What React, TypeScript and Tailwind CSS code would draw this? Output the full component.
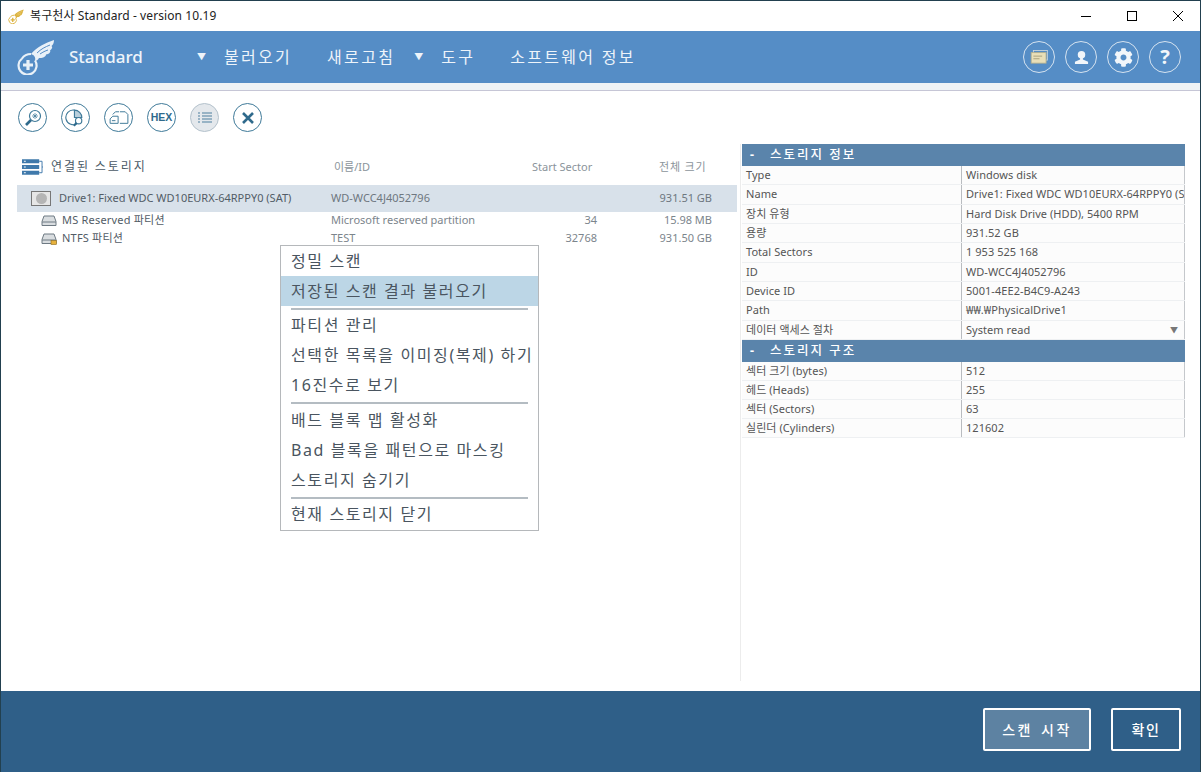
import React from "react";
import { FaCog } from "react-icons/fa";

const font = { fontFamily: '"Noto Sans","Noto Sans CJK KR",sans-serif' };

function Wing({ className = "", line = "#558dc6" }: { className?: string; line?: string }) {
  return (
    <svg viewBox="0 0 40 36" className={className} fill="none">
      <path d="M14 15C20 8 28 4 37 1C37 4 36 6 34.5 7C36 8 35 10 33 11.5C34 13 32 15 29 15.5C29 18 25 19.5 22 19C21 21 19.5 22 18 22C19 18 17 16 14 15Z" fill="currentColor" />
      <path d="M20 14C24 10 28 8 33 6M23 15C26 13 28 12 31 11" stroke={line} strokeWidth="1" />
      <path d="M18 21.5A9 9 0 1 1 5 19.5C7 16.5 10 15 14 15" stroke="currentColor" strokeWidth="2.2" />
      <path d="M11 21V31M6 26H16" stroke="currentColor" strokeWidth="3.2" />
    </svg>
  );
}

function ToolCircle({ children, active }: { children: React.ReactNode; active?: boolean }) {
  return (
    <div className={`flex h-[29px] w-[29px] items-center justify-center rounded-full border-[1.5px] ${active ? "border-[#b4c2cc] bg-[#e4e8ec]" : "border-[#3f7a99] bg-white"}`}>
      {children}
    </div>
  );
}

function HeadCircle({ children }: { children: React.ReactNode }) {
  return <div className="flex h-8 w-8 items-center justify-center rounded-full border-[1.5px] border-[#d5e3f0]">{children}</div>;
}

const infoRows = [
  ["Type", "Windows disk"],
  ["Name", "Drive1: Fixed WDC WD10EURX-64RPPY0 (S"],
  ["장치 유형", "Hard Disk Drive (HDD), 5400 RPM"],
  ["용량", "931.52 GB"],
  ["Total Sectors", "1 953 525 168"],
  ["ID", "WD-WCC4J4052796"],
  ["Device ID", "5001-4EE2-B4C9-A243"],
  ["Path", "₩₩.₩PhysicalDrive1"],
];

const structRows = [
  ["섹터 크기 (bytes)", "512"],
  ["헤드 (Heads)", "255"],
  ["섹터 (Sectors)", "63"],
  ["실린더 (Cylinders)", "121602"],
];

function Row({ a, b, arrow, tight }: { a: string; b: string; arrow?: boolean; tight?: boolean }) {
  return (
    <div className={`flex border-b border-[#eef0f2] bg-[#fcfcfc] text-[11px] leading-[17px] tracking-[0.05px] text-[#555] ${tight ? "h-[18.9px]" : "h-[19.33px]"}`}>
      <div className="w-[220px] shrink-0 truncate border-r border-[#b9bcc0] pl-1">{a}</div>
      <div className="flex min-w-0 flex-1 justify-between overflow-hidden whitespace-nowrap border-r border-[#c5c8cc] pl-1 pr-[6px]">
        <span>{b}</span>
        {arrow && <span className="text-[8px] text-[#777]">▼</span>}
      </div>
    </div>
  );
}

function Section({ title }: { title: string }) {
  return (
    <div className="flex h-[22px] items-center bg-[#5a84ab] pl-2 text-[12.5px] font-medium tracking-[2px] text-white">
      <span className="w-[20px] font-bold">-</span>
      <span>{title}</span>
    </div>
  );
}

function Menu() {
  const item = "flex h-[30px] items-center pl-[10px] text-[16px] tracking-[1.6px] text-[#4a5560] whitespace-nowrap";
  const sep = "mx-[10px] h-0 border-t-2 border-[#b4bcc2]";
  return (
    <div className="absolute left-[279px] top-[244px] h-[286px] w-[259px] border border-[#b5b8bb] bg-white">
      <div className={item}>정밀 스캔</div>
      <div className={`${item} bg-[#bcd6e6]`}>저장된 스캔 결과 불러오기</div>
      <div className="h-[2px]" />
      <div className={sep} />
      <div className={item}>파티션 관리</div>
      <div className={item}>선택한 목록을 이미징(복제) 하기</div>
      <div className={item}>16진수로 보기</div>
      <div className="h-[2px]" />
      <div className={sep} />
      <div className="h-[1px]" />
      <div className={item}>배드 블록 맵 활성화</div>
      <div className={item}>Bad 블록을 패턴으로 마스킹</div>
      <div className={item}>스토리지 숨기기</div>
      <div className="h-[2px]" />
      <div className={sep} />
      <div className={item}>현재 스토리지 닫기</div>
    </div>
  );
}

function DiskIcon({ badge }: { badge?: boolean }) {
  return (
    <svg viewBox="0 0 16 12" className="h-3 w-4" fill="none">
      <path d="M3 1H13L15 6.5V10.5H1V6.5Z" fill="#d9dde0" stroke="#6e7a83" />
      <path d="M1 7H15" stroke="#6e7a83" />
      {badge && <rect x="10" y="7.5" width="5.5" height="4" fill="#e7b13c" stroke="#8a6a1c" strokeWidth="0.6" />}
    </svg>
  );
}

export default function App() {
  return (
    <div className="relative flex h-[772px] w-[1201px] flex-col overflow-hidden border-x border-t border-x-[#22404f] border-t-[#22404f] bg-white" style={font}>
      {/* title bar */}
      <div className="flex h-[30px] shrink-0 items-center bg-white pl-[7px]">
        <Wing className="h-[15px] w-[17px] text-[#dcb23e]" line="#f6e7a8" />
        <span className="ml-[5px] text-[12px] tracking-[0.09px] text-[#222]">복구천사 Standard - version 10.19</span>
        <div className="ml-auto flex h-full items-center">
          <div className="flex w-[46px] justify-center"><div className="h-[1px] w-[10px] bg-black" /></div>
          <div className="flex w-[46px] justify-center"><div className="h-[10px] w-[10px] border border-black" /></div>
          <div className="flex w-[45px] justify-center">
            <svg viewBox="0 0 10 10" className="h-[10px] w-[10px]" stroke="#000" strokeWidth="1"><path d="M0 0L10 10M10 0L0 10" /></svg>
          </div>
        </div>
      </div>

      {/* header */}
      <div className="flex h-[52px] shrink-0 items-center bg-[#558dc6] pl-[16px] pr-[19px] text-[#eef4fa]">
        <Wing className="h-[36px] w-[40px] text-[#e9f1f8]" />
        <span className="ml-[12px] w-[128px] text-[17px] font-medium">Standard</span>
        <span className="w-[27px] text-[9px]">▼</span>
        <span className="text-[16px] tracking-[2.3px]">불러오기</span>
        <span className="ml-[35px] text-[16px] tracking-[2.3px]">새로고침</span>
        <span className="ml-[19px] w-[27px] text-[9px]">▼</span>
        <span className="text-[16px] tracking-[2.3px]">도구</span>
        <span className="ml-[35px] text-[16px] tracking-[2.3px]">소프트웨어 정보</span>
        <div className="ml-auto flex gap-[10px]">
          <HeadCircle>
            <svg viewBox="0 0 20 16" className="h-[14px] w-[19px]">
              <rect x="3" y="0.5" width="16" height="11" fill="none" stroke="#c9d6dd" />
              <rect x="0.5" y="3" width="17" height="12" fill="#e9dfb8" stroke="#b5b08e" />
              <path d="M3 7H13M3 10H10" stroke="#a09a78" />
            </svg>
          </HeadCircle>
          <HeadCircle>
            <svg viewBox="0 0 16 16" className="h-[15px] w-[15px]" fill="#f2f6fa">
              <circle cx="8" cy="5" r="4" />
              <path d="M6.5 8H9.5V10L15 12.5V15H1V12.5L6.5 10Z" />
            </svg>
          </HeadCircle>
          <HeadCircle>
            <FaCog className="h-[19px] w-[19px] text-[#f2f6fa]" />
          </HeadCircle>
          <HeadCircle>
            <span className="text-[20px] font-bold leading-none text-[#f2f6fa]">?</span>
          </HeadCircle>
        </div>
      </div>

      <div className="h-[7px] shrink-0 bg-[#eef3f6]" />
      <div className="h-[1px] shrink-0 bg-[#c6c6d6]" />

      {/* toolbar */}
      <div className="flex h-[53px] shrink-0 items-center gap-[14px] pl-[17px]">
        <ToolCircle>
          <svg viewBox="0 0 20 20" className="h-[20px] w-[20px]" fill="none" stroke="#3f7a99">
            <circle cx="12" cy="8" r="5.5" strokeWidth="1.2" />
            <path d="M12 5V11M9 8H15M10 6L14 10M14 6L10 10" strokeWidth="0.7" />
            <path d="M8 12L3 17" strokeWidth="2.6" stroke="#2f6a8c" />
          </svg>
        </ToolCircle>
        <ToolCircle>
          <svg viewBox="0 0 20 20" className="h-[21px] w-[21px]" fill="none" stroke="#3f7a99" strokeWidth="1.1">
            <path d="M9 3A7 7 0 1 0 12 15.5" />
            <path d="M9 3V10H16A7 7 0 0 0 9 3Z" fill="#b9cfdc" />
            <circle cx="13" cy="13" r="3" fill="#fff" />
            <path d="M11 15L8.5 18" strokeWidth="2" stroke="#2f6a8c" />
          </svg>
        </ToolCircle>
        <ToolCircle>
          <svg viewBox="0 0 22 18" className="h-[16px] w-[20px]" fill="none" stroke="#3f7a99" strokeWidth="1.1">
            <path d="M1 15V10L4 7H10V15Z" />
            <path d="M3 12H7" />
            <path d="M4 5L7 2H11" />
            <path d="M12 2H18L21 5V15H12" />
          </svg>
        </ToolCircle>
        <ToolCircle>
          <span className="text-[10.5px] font-bold leading-none text-[#2f6a8c]" style={{ fontFamily: '"Liberation Sans",sans-serif' }}>HEX</span>
        </ToolCircle>
        <ToolCircle active>
          <svg viewBox="0 0 14 11" className="h-[11px] w-[14px]" stroke="#7fa1b8" strokeWidth="1.4">
            <path d="M0 1H2M4 1H14M0 4H2M4 4H14M0 7H2M4 7H14M0 10H2M4 10H14" />
          </svg>
        </ToolCircle>
        <ToolCircle>
          <svg viewBox="0 0 12 12" className="h-[12px] w-[12px]" stroke="#2f6a8c" strokeWidth="2.6">
            <path d="M1 1L11 11M11 1L1 11" />
          </svg>
        </ToolCircle>
      </div>

      {/* main */}
      <div className="flex min-h-0 flex-1">
        <div className="relative w-[721px] shrink-0 pl-[16px]">
          <div className="flex h-[41px] items-start pt-[14px] text-[11px] text-[#8b949b]">
            <div className="flex w-[317px] items-center pl-[5px]">
              <svg viewBox="0 0 22 18" className="h-[18px] w-[21px]">
                <path d="M0 1H18V5H0ZM0 7H18V11H0ZM0 13H18V17H0Z" fill="#3f79ab" />
                <path d="M2 3H4M2 9H4M2 15H4" stroke="#fff" />
                <path d="M18 3H21V15H18M21 9H22" fill="none" stroke="#3f79ab" />
              </svg>
              <span className="ml-[8px] text-[12px] tracking-[1.9px] text-[#4b5a66]">연결된 스토리지</span>
            </div>
            <span className="w-[198px] pt-[1px]">이름/ID</span>
            <span className="w-[92px] pt-[1px]">Start Sector</span>
            <span className="pl-[35px] pt-[1px] tracking-[0.8px] whitespace-nowrap">전체 크기</span>
          </div>

          <div className="flex h-[27px] w-[720px] items-center bg-[#d8e1ea] text-[11px] text-[#525c66]">
            <div className="ml-[14px] flex h-[15px] w-[20px] items-center justify-center border border-[#777] bg-[#e6e6e6]">
              <div className="h-[11px] w-[11px] rounded-full bg-[#b5b5b5]" />
            </div>
            <span className="ml-[8px] w-[272px] whitespace-nowrap">Drive1: Fixed WDC WD10EURX-64RPPY0 (SAT)</span>
            <span className="text-[#6e7780]">WD-WCC4J4052796</span>
            <span className="ml-auto pr-[25px] text-[#6e7780]">931.51 GB</span>
          </div>

          <div className="flex h-[18px] w-[720px] items-center pb-[2px] text-[11px] text-[#525c66]">
            <div className="ml-[24px] mt-[2px]"><DiskIcon /></div>
            <span className="ml-[5px] w-[269px] tracking-[0.2px]">MS Reserved 파티션</span>
            <span className="w-[226px] text-[#7c858c]">Microsoft reserved partition</span>
            <span className="w-[40px] text-right text-[#7c858c]">34</span>
            <span className="ml-auto pr-[25px] text-[#7c858c]">15.98 MB</span>
          </div>
          <div className="flex h-[18px] w-[720px] items-center pb-[2px] text-[11px] text-[#525c66]">
            <div className="ml-[24px] mt-[2px]"><DiskIcon badge /></div>
            <span className="ml-[5px] w-[269px] tracking-[0.2px]">NTFS 파티션</span>
            <span className="w-[226px] text-[#7c858c]">TEST</span>
            <span className="w-[40px] text-right text-[#7c858c]">32768</span>
            <span className="ml-auto pr-[25px] text-[#7c858c]">931.50 GB</span>
          </div>
        </div>

        {/* right panel */}
        <div className="flex min-w-0 flex-1 flex-col">
          <div className="ml-[18px] h-[537px] border-l border-l-[#ececec] pl-[1px]">
            <div className="w-[443px]">
              <Section title="스토리지 정보" />
              {infoRows.map(([a, b]) => <Row key={a} a={a} b={b} />)}
              <Row a="데이터 액세스 절차" b="System read" arrow />
              <Section title="스토리지 구조" />
              {structRows.map(([a, b]) => <Row key={a} a={a} b={b} tight />)}
            </div>
          </div>
        </div>
      </div>

      {/* footer */}
      <div className="flex h-[81px] shrink-0 items-center justify-end gap-[20px] bg-[#2f5f88] pb-[5px] pr-[19px]">
        <div className="flex h-[43px] w-[108px] items-center justify-center rounded-[2px] border-2 border-white bg-[#5d82a2] text-[14px] font-medium tracking-[2.5px] [word-spacing:2px] text-white">스캔 시작</div>
        <div className="flex h-[43px] w-[70px] items-center justify-center rounded-[2px] border-2 border-white text-[14px] font-medium tracking-[1.5px] text-white">확인</div>
      </div>

      <Menu />
    </div>
  );
}
